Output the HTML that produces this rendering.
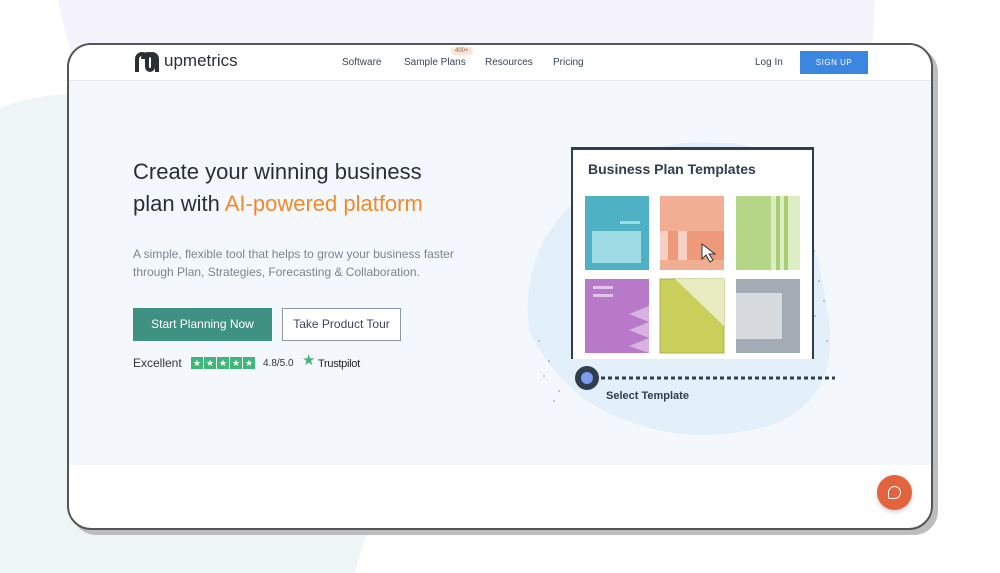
<!DOCTYPE html>
<html><head><meta charset="utf-8"><style>
*{margin:0;padding:0;box-sizing:border-box}
body{width:1000px;height:573px;position:relative;overflow:hidden;background:#fff;font-family:"Liberation Sans",sans-serif}
.frame{position:absolute;left:67px;top:43px;width:866px;height:487px;border:2px solid #555;border-radius:24px;background:#fff;overflow:hidden;box-shadow:5px 5px 0 #bdbdbd}
.nav{position:absolute;left:0;top:0;width:100%;height:36px;border-bottom:1px solid #e6e9ee;background:#fff}
.hero{position:absolute;left:0;top:36px;width:100%;height:384px;background:#f4f8fd}
.t{position:absolute;white-space:nowrap}
.navl{font-size:10px;color:#3a4656;top:12px}
</style></head><body>
<svg style="position:absolute;left:0;top:0" width="1000" height="573">
<path d="M58 0 H875 L872 50 H70 Z" fill="#f4f2fb"/>
<path d="M0 108 Q40 92 80 95 L80 573 H0 Z" fill="#eef5f6"/>
<path d="M60 528 H370 Q360 550 355 573 H60 Z" fill="#eef5f6"/>
</svg>
<div class="frame">
<div class="hero">
<svg style="position:absolute;left:450px;top:20px" width="400" height="360">
<path d="M70 90 Q120 35 200 42 Q260 40 280 100 Q300 150 310 220 Q320 300 250 325 Q170 345 110 320 Q45 300 10 230 Q0 140 70 90Z" fill="#e3eff9"/>
<g fill="#7f8ea3" opacity=".6"><circle cx="30" cy="260" r="1"/><circle cx="25" cy="275" r="1"/><circle cx="40" cy="290" r="1"/><circle cx="20" cy="240" r="1"/><circle cx="35" cy="300" r="1"/><circle cx="300" cy="180" r="1"/><circle cx="305" cy="200" r="1"/><circle cx="296" cy="215" r="1"/><circle cx="308" cy="240" r="1"/><circle cx="295" cy="150" r="1"/></g>
</svg>
<div style="position:absolute;left:502px;top:66px;width:243px;height:212px;background:#fff;border:2px solid #2f3d4f;border-bottom:none;border-top-width:3px"></div>
<div class="t" style="left:519px;top:80px;font-size:14px;font-weight:bold;color:#2f3d4f">Business Plan Templates</div>
<svg style="position:absolute;left:516px;top:115px" width="220" height="160">
<rect x="0" y="0" width="64" height="74" fill="#4fb1c4"/><rect x="7" y="35" width="49" height="32" fill="#9edbe4"/><rect x="35" y="25" width="20" height="3" fill="#9edbe4"/>
<rect x="75" y="0" width="64" height="74" fill="#f1ae93"/><rect x="75" y="35" width="64" height="29" fill="#ee9a7a"/><rect x="75" y="35" width="8" height="29" fill="#f6d0c2"/><rect x="93" y="35" width="9" height="29" fill="#f6d0c2"/>
<path d="M117 48 L117 63 L121 59 L125 66 L128 64 L124 58 L130 58 Z" fill="#fff" stroke="#333" stroke-width="1"/>
<rect x="151" y="0" width="64" height="74" fill="#b5d686"/><rect x="186" y="0" width="29" height="74" fill="#ddeec7"/><rect x="191" y="0" width="4" height="74" fill="#a8cf72"/><rect x="199" y="0" width="4" height="74" fill="#a8cf72"/>
<rect x="0" y="83" width="64" height="74" fill="#b87ac8"/><rect x="8" y="90" width="20" height="3" fill="#e0c4ea"/><rect x="8" y="98" width="20" height="3" fill="#e0c4ea"/>
<path d="M64 110 L44 118 L64 126 L44 134 L64 142 L44 150 L64 157Z" fill="#d7b2e2"/>
<rect x="75" y="83" width="64" height="74" fill="#c9cf5a" stroke="#aab04a"/><path d="M90 83 L139 83 L139 130Z" fill="#e9ecc0"/>
<rect x="151" y="83" width="64" height="74" fill="#a3acb5"/><rect x="151" y="97" width="46" height="46" fill="#d7dbdf"/>
</svg>
<svg style="position:absolute;left:500px;top:283px" width="270" height="40">
<line x1="25" y1="14" x2="266" y2="14" stroke="#2f3d4f" stroke-width="3" stroke-dasharray="4 3"/>
<circle cx="18" cy="14" r="12" fill="#2f3d4f"/><circle cx="18" cy="14" r="6" fill="#7b9cf0"/>
</svg>
<div class="t" style="left:537px;top:309px;font-size:11px;font-weight:bold;color:#2f3d4f">Select Template</div>
<div class="t" style="left:64px;top:75px;font-size:22px;line-height:32px;color:#2a2f36">Create your winning business<br>plan with <span style="color:#f08a2c">AI-powered platform</span></div>
<div class="t" style="left:64px;top:164px;font-size:12px;line-height:18px;color:#7a8391">A simple, flexible tool that helps to grow your business faster<br>through Plan, Strategies, Forecasting &amp; Collaboration.</div>
<div class="t" style="left:64px;top:227px;width:139px;height:33px;background:#3f9282;color:#fff;font-size:12px;line-height:33px;text-align:center">Start Planning Now</div>
<div class="t" style="left:213px;top:227px;width:119px;height:33px;border:1px solid #8b97a6;color:#3a4656;font-size:12px;line-height:31px;text-align:center;background:#fff">Take Product Tour</div>
<div class="t" style="left:64px;top:275px;font-size:12px;color:#333">Excellent</div>
<div class="t" style="left:122px;top:276px;display:flex;gap:1px"><span style="display:inline-block;width:12px;height:12px;background:#3fb67a;color:#fff;font-size:9px;line-height:12px;text-align:center">★</span><span style="display:inline-block;width:12px;height:12px;background:#3fb67a;color:#fff;font-size:9px;line-height:12px;text-align:center">★</span><span style="display:inline-block;width:12px;height:12px;background:#3fb67a;color:#fff;font-size:9px;line-height:12px;text-align:center">★</span><span style="display:inline-block;width:12px;height:12px;background:#3fb67a;color:#fff;font-size:9px;line-height:12px;text-align:center">★</span><span style="display:inline-block;width:12px;height:12px;background:#3fb67a;color:#fff;font-size:9px;line-height:12px;text-align:center">★</span></div>
<div class="t" style="left:194px;top:277px;font-size:10px;color:#333">4.8/5.0</div>
<div class="t" style="left:233px;top:270px;font-size:15px;color:#3fb67a">★</div>
<div class="t" style="left:249px;top:277px;font-size:11px;color:#222;letter-spacing:-.3px">Trustpilot</div>
</div>
<div class="nav">
<svg style="position:absolute;left:64px;top:5px" width="28" height="26" viewBox="0 0 28 26"><path d="M4 22 V9 A5 5 0 0 1 14 9 V17 A3 3 0 0 0 20 17 V9 A5 5 0 0 0 10 9" fill="none" stroke="#2a2f36" stroke-width="4"/><path d="M14 9 A5 5 0 0 1 24 9 V22" fill="none" stroke="#2a2f36" stroke-width="4"/></svg>
<div class="t" style="left:95px;top:6px;font-size:17px;color:#2a2f36">upmetrics</div>
<div class="t navl" style="left:273px">Software</div>
<div class="t navl" style="left:335px">Sample Plans</div>
<div class="t" style="left:382px;top:2px;font-size:6px;color:#8a6a50;background:#fbe5d6;border-radius:5px;padding:1px 4px">400+</div>
<div class="t navl" style="left:416px">Resources</div>
<div class="t navl" style="left:484px">Pricing</div>
<div class="t navl" style="left:686px">Log In</div>
<div class="t" style="left:731px;top:6px;width:68px;height:23px;background:#3a86e0;color:#fff;font-size:8px;line-height:23px;text-align:center;letter-spacing:.5px">SIGN UP</div>
</div>
<div style="position:absolute;left:808px;top:430px;width:35px;height:35px;border-radius:50%;background:#e2643e;box-shadow:0 2px 4px rgba(0,0,0,.2)"><div style="position:absolute;left:11px;top:11px;width:13px;height:13px;border:1.5px solid #fff;border-radius:50% 50% 50% 2px"></div></div>
</div>
</body></html>
